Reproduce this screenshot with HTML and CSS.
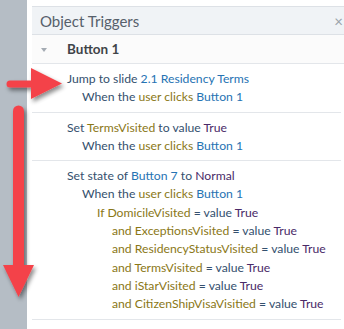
FILE: index.html
```html
<!DOCTYPE html>
<html lang="en">
<head>
    <meta charset="UTF-8">
    <title>Object Triggers</title>
    <link rel="stylesheet" href="styles.css">
</head>
<body>
    <div class="shell">
        <div class="rail"></div>
        <div class="panel">
            <div class="panel-head">
                <span class="title">Object Triggers</span>
                <span class="close">&#215;</span>
            </div>
            <div class="group-head">
                <span class="caret"></span>
                <span class="group-name">Button 1</span>
            </div>
            <div class="trigger">
                <div class="line l0">Jump to slide <span class="obj">2.1 Residency Terms</span></div>
                <div class="line l1">When the <span class="var">user clicks</span> <span class="obj">Button 1</span></div>
            </div>
            <div class="trigger">
                <div class="line l0">Set <span class="var">TermsVisited</span> to value <span class="val">True</span></div>
                <div class="line l1">When the <span class="var">user clicks</span> <span class="obj">Button 1</span></div>
            </div>
            <div class="trigger">
                <div class="line l0">Set state of <span class="obj">Button 7</span> to <span class="val">Normal</span></div>
                <div class="line l1">When the <span class="var">user clicks</span> <span class="obj">Button 1</span></div>
                <div class="line l2"><span class="var">If DomicileVisited</span> = value <span class="val">True</span></div>
                <div class="line l3"><span class="var">and ExceptionsVisited</span> = value <span class="val">True</span></div>
                <div class="line l3"><span class="var">and ResidencyStatusVisited</span> = value <span class="val">True</span></div>
                <div class="line l3"><span class="var">and TermsVisited</span> = value <span class="val">True</span></div>
                <div class="line l3"><span class="var">and iStarVisited</span> = value <span class="val">True</span></div>
                <div class="line l3"><span class="var">and CitizenShipVisaVisitied</span> = value <span class="val">True</span></div>
            </div>
        </div>
        <!-- red callout arrows drawn over the panel -->
        <svg class="arrows" width="344" height="329" viewBox="0 0 344 329">
            <defs>
                <filter id="shade" x="-20%" y="-20%" width="140%" height="140%">
                    <feDropShadow dx="2" dy="3" stdDeviation="2" flood-color="#000" flood-opacity="0.45"/>
                </filter>
            </defs>
            <g fill="#f4434a" filter="url(#shade)">
                <path d="M10 80.5 H35 V87.5 H10 A3.5 3.5 0 0 1 10 80.5 Z"/>
                <polygon points="31,68 62,83.5 31,99"/>
                <path d="M13 111 A5.5 5.5 0 0 1 24 111 V268 H13 Z"/>
                <polygon points="3,265 34,265 18.5,297"/>
            </g>
        </svg>
    </div>
</body>
</html>
```

FILE: styles.css
```css
body { margin: 0; font-family: Lato, "Open Sans", sans-serif; background: #fff; }
.shell { position: relative; display: flex; width: 344px; height: 329px; overflow: hidden; }
.rail { width: 27px; flex: none; background: #b5bdc5; }
.panel { flex: 1; margin: 6px 0 0 5px; min-width: 0; }

.panel-head {
    display: flex; justify-content: space-between; align-items: center;
    height: 27px; padding-left: 8px;
    background: #f0f3f6; border-top: 1px solid #dde1e6; border-bottom: 1px solid #dde1e6;
}
.title { font-size: 15px; color: #56606b; }
.close { font-size: 15px; color: #9aa2aa; margin-right: 1px; }

.group-head {
    display: flex; align-items: center;
    height: 28px; background: #fbfbfb; border-bottom: 1px solid #e3e6ea;
}
.caret {
    width: 0; height: 0; margin: 1px 0 0 9px;
    border-left: 3.5px solid transparent; border-right: 3.5px solid transparent; border-top: 4px solid #a4abb3;
}
.group-name { margin-left: 20px; font-size: 13.5px; font-weight: bold; color: #3f4448; }

.trigger { padding: 6px 0 5px; border-bottom: 1px solid #e3e6ea; margin-right: 3px; }
.line { font-size: 12.2px; line-height: 18.3px; color: #34506e; white-space: nowrap; }
.l0 { padding-left: 35px; }
.l1 { padding-left: 50px; }
.l2 { padding-left: 65px; }
.l3 { padding-left: 80px; }
.obj { color: #2673b3; }
.var { color: #8a7716; }
.val { color: #4a2a68; }

.arrows { position: absolute; top: 0; left: 0; pointer-events: none; }
```
